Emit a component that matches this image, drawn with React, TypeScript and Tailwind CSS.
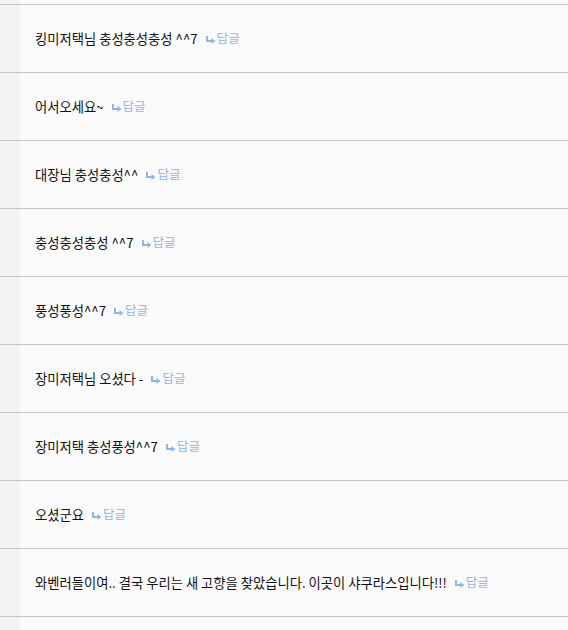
const comments = [
  "킹미저택님 충성충성충성 ^^7",
  "어서오세요~",
  "대장님 충성충성^^",
  "충성충성충성 ^^7",
  "풍성풍성^^7",
  "장미저택님 오셨다 -",
  "장미저택 충성풍성^^7",
  "오셨군요",
  "와벤러들이여.. 결국 우리는 새 고향을 찾았습니다. 이곳이 샤쿠라스입니다!!!",
];

function ReplyLink() {
  return (
    <a href="#" className="ml-[8px] inline-flex items-center text-[12.5px] text-[#93b5e6] no-underline">
      <svg width="10" height="8" viewBox="0 0 10 8" className="mr-[1px] mt-[2px]">
        <path d="M1 0v5h5" stroke="#93b5e6" strokeWidth="2" fill="none" />
        <path d="M5.5 2L9.5 5L5.5 8z" fill="#93b5e6" />
      </svg>
      답글
    </a>
  );
}

export default function App() {
  return (
    <div
      className="h-[630px] w-[568px] overflow-hidden bg-[#fafafa] text-[13.3px] text-[#111]"
      style={{ fontFamily: '"Noto Sans CJK KR", "Noto Sans", sans-serif' }}
    >
      <div className="flex h-[4px]">
        <div className="w-[20px] bg-[#f3f3f3]" />
      </div>
      {[...comments, ""].map((c, i) => (
        <div key={i} className="flex h-[68px] border-t border-[#c4c4c4]">
          <div className="w-[20px] shrink-0 bg-[#f3f3f3]" />
          <div className="flex flex-1 items-center pl-[15px]">
            {c && (
              <>
                <span>{c}</span>
                <ReplyLink />
              </>
            )}
          </div>
        </div>
      ))}
    </div>
  );
}
